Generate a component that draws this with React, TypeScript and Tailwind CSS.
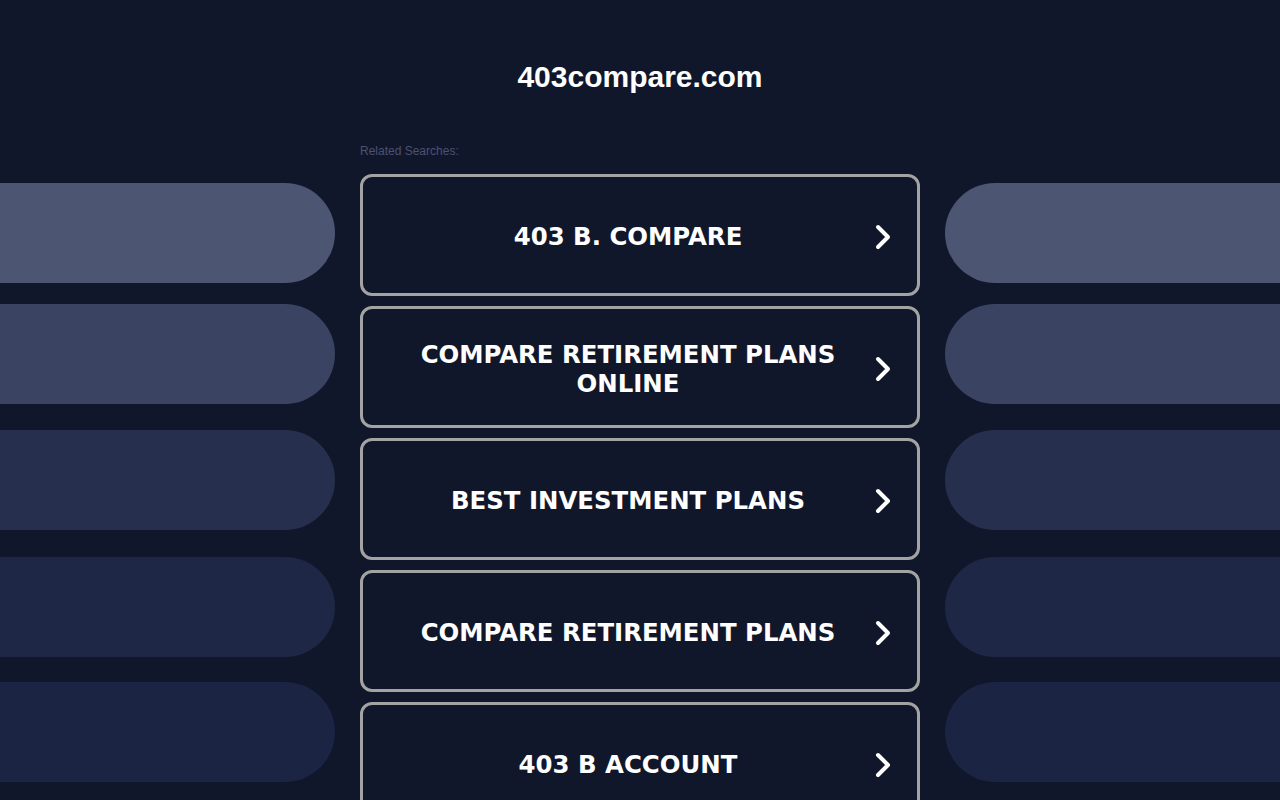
import React from "react";

const links = [
  "403 B. Compare",
  "Compare Retirement Plans Online",
  "Best Investment Plans",
  "Compare Retirement Plans",
  "403 B Account",
];

// side pills, top-down, lighter to darker
const pills = [
  "mt-[89px] bg-[#4c5672]",
  "mt-[21px] bg-[#3a4361]",
  "mt-[26px] bg-[#262f4d]",
  "mt-[27px] bg-[#1e2746]",
  "mt-[25px] bg-[#1b2442]",
];

function Chevron() {
  return (
    <svg width="16" height="26" viewBox="0 0 16 26" fill="none" className="shrink-0">
      <path
        d="M3 3 L13 13 L3 23"
        stroke="white"
        strokeWidth="4"
        strokeLinecap="round"
        strokeLinejoin="round"
      />
    </svg>
  );
}

export default function App() {
  return (
    <div className="h-[800px] w-[1280px] overflow-hidden bg-[#11172b] font-['Liberation_Sans',Arial,sans-serif]">
      <h1 className="pt-[59px] pb-[-1px] text-center text-[30px] font-bold leading-[35px] text-white">
        403compare.com
      </h1>

      <div className="flex gap-[25px]">
        {/* left pills */}
        <div className="flex w-[335px] flex-col">
          {pills.map((c) => (
            <div key={c} className={`h-[100px] rounded-r-[50px] ${c}`} />
          ))}
        </div>

        {/* links */}
        <div className="w-[560px]">
          <p className="mt-[50px] text-[12px] leading-[14px] text-[#4b5272]">
            Related Searches:
          </p>
          <div className="mt-[16px] flex flex-col gap-[10px]">
            {links.map((l) => (
              <a
                key={l}
                href="#"
                className="flex h-[122px] items-center rounded-[12px] border-[3px] border-[#a3a3a3] pl-[18px] pr-[26px] pt-[3px]"
              >
                <span className="flex-1 px-[10px] text-center font-['DejaVu_Sans',Verdana,sans-serif] text-[24.4px] font-bold uppercase leading-[29px] text-white">
                  {l}
                </span>
                <Chevron />
              </a>
            ))}
          </div>
        </div>

        {/* right pills */}
        <div className="flex flex-1 flex-col">
          {pills.map((c) => (
            <div key={c} className={`h-[100px] rounded-l-[50px] ${c}`} />
          ))}
        </div>
      </div>
    </div>
  );
}
